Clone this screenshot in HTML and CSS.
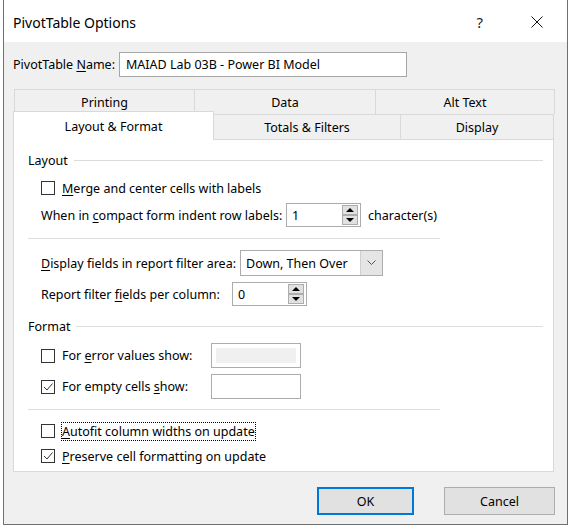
FILE: index.html
```html
<!DOCTYPE html>
<html>
<head>
<meta charset="utf-8">
<link rel="stylesheet" href="styles.css">
</head>
<body>
<div class="dialog">
  <div class="titlebar">
    <span class="title">PivotTable Options</span>
    <span class="help">?</span>
    <svg class="close" width="12" height="12" viewBox="0 0 12 12"><path d="M0.5 0.5 L11.5 11.5 M11.5 0.5 L0.5 11.5" stroke="#111" stroke-width="1"/></svg>
  </div>
  <div class="body">
    <div class="name-row">
      <span class="name-label">PivotTable <u>N</u>ame:</span>
      <div class="name-input">MAIAD Lab 03B - Power BI Model</div>
    </div>
    <div class="tabs">
      <div class="tab-row back">
        <div class="tab t-print">Printing</div>
        <div class="tab t-data">Data</div>
        <div class="tab t-alt">Alt Text</div>
      </div>
      <div class="tab-row front">
        <div class="tab t-layout active">Layout &amp; Format</div>
        <div class="tab t-totals">Totals &amp; Filters</div>
        <div class="tab t-display">Display</div>
      </div>
    </div>
    <div class="panel">
      <div class="legend legend-layout"><span>Layout</span><div class="legend-line"></div></div>
      <div class="row r-merge"><span class="cb"></span><span class="cb-label"><u>M</u>erge and center cells with labels</span></div>
      <div class="row r-compact">
        <span class="lbl lbl-compact">When in <u>c</u>ompact form indent row labels:</span>
        <div class="spin spin-compact"><span class="spin-val">1</span><div class="spin-btns"><div class="sb"><span class="tri up"></span></div><div class="sb"><span class="tri down"></span></div></div></div>
        <span class="after">character(s)</span>
      </div>
      <div class="sep sep1"></div>
      <div class="row r-display">
        <span class="lbl lbl-display"><u>D</u>isplay fields in report filter area:</span>
        <div class="combo"><span class="combo-val">Down, Then Over</span><div class="combo-btn"><svg width="9" height="6" viewBox="0 0 9 6"><path d="M0.5 0.5 L4.5 4.5 L8.5 0.5" fill="none" stroke="#555" stroke-width="1"/></svg></div></div>
      </div>
      <div class="row r-report">
        <span class="lbl lbl-report">Report filter <u>f</u>ields per column:</span>
        <div class="spin spin-report"><span class="spin-val">0</span><div class="spin-btns"><div class="sb"><span class="tri up"></span></div><div class="sb"><span class="tri down"></span></div></div></div>
      </div>
      <div class="legend legend-format"><span>Format</span><div class="legend-line"></div></div>
      <div class="row r-error">
        <span class="cb"></span><span class="cb-label fmt-label">For <u>e</u>rror values show:</span>
        <div class="tbox disabled"><div class="tbox-fill"></div></div>
      </div>
      <div class="row r-empty">
        <span class="cb checked"><svg width="12" height="12" viewBox="0 0 12 12"><path d="M2 6 L5 9 L10.5 2.5" fill="none" stroke="#333" stroke-width="1"/></svg></span><span class="cb-label fmt-label">For empty cells <u>s</u>how:</span>
        <div class="tbox"></div>
      </div>
      <div class="sep sep2"></div>
      <div class="row r-autofit"><span class="cb"></span><span class="cb-label focus"><u>A</u>utofit column widths on update</span></div>
      <div class="row r-preserve"><span class="cb checked"><svg width="12" height="12" viewBox="0 0 12 12"><path d="M2 6 L5 9 L10.5 2.5" fill="none" stroke="#333" stroke-width="1"/></svg></span><span class="cb-label"><u>P</u>reserve cell formatting on update</span></div>
    </div>
    <div class="buttons">
      <div class="btn ok">OK</div>
      <div class="btn cancel">Cancel</div>
    </div>
  </div>
</div>
</body>
</html>
```

FILE: styles.css
```css
html, body {
  margin: 0;
  padding: 0;
  background: #ffffff;
}
body {
  font-family: "Noto Sans", "Open Sans", sans-serif;
  font-size: 12.5px;
  color: #000;
}
u { text-decoration: underline; text-underline-offset: 2px; }
.dialog {
  margin-left: 3px;
  width: 563px;
  height: 524px;
  border: 1px solid #6f6f6f;
  border-top: none;
  display: flex;
  flex-direction: column;
  background: #f0f0f0;
}
.titlebar {
  height: 42px;
  background: #ffffff;
  display: flex;
  align-items: center;
  flex-shrink: 0;
}
.title {
  font-size: 14px;
  margin-left: 9px;
  margin-top: 3px;
  color: #000;
}
.help {
  font-size: 15px;
  margin-left: auto;
  margin-right: 48px;
  margin-top: 1px;
  color: #222;
}
.close {
  margin-right: 24px;
  margin-top: 2px;
}
.body {
  flex: 1;
  display: flex;
  flex-direction: column;
  padding: 10px 0 0 9px;
}
.name-row {
  display: flex;
  align-items: center;
  height: 25px;
}
.name-label {
  width: 106px;
  white-space: nowrap;
}
.name-input {
  width: 280px;
  height: 23px;
  border: 1px solid #a6a6a6;
  background: #fff;
  display: flex;
  align-items: center;
  padding-left: 6px;
}
.tabs {
  margin-top: 12px;
  width: 541px;
}
.tab-row {
  display: flex;
  height: 25px;
}
.tab {
  display: flex;
  align-items: center;
  justify-content: center;
  border: 1px solid #d9d9d9;
  border-bottom: none;
  background: #f0f0f0;
  box-sizing: border-box;
  height: 25px;
  margin-right: -1px;
}
.back { padding-left: 1px; }
.t-print { width: 181px; }
.t-data { width: 182px; }
.t-alt { width: 180px; }
.front { align-items: flex-end; }
.t-layout { width: 201px; }
.t-totals { width: 188px; }
.t-display { width: 154px; }
.tab.active {
  background: #fff;
  position: relative;
  z-index: 1;
  margin-bottom: -1px;
  height: 29px;
}
.panel {
  width: 541px;
  height: 333px;
  box-sizing: border-box;
  border: 1px solid #d9d9d9;
  background: #fff;
  padding-top: 10px;
}
.legend {
  display: flex;
  align-items: center;
  height: 20px;
  margin-left: 14px;
  margin-right: 10px;
}
.legend-line {
  flex: 1;
  height: 1px;
  background: #dcdcdc;
  margin-left: 6px;
  margin-top: 1px;
}
.row {
  display: flex;
  align-items: center;
  margin-left: 27px;
  white-space: nowrap;
}
.r-merge { height: 20px; margin-top: 8px; }
.r-compact { height: 24px; margin-top: 5px; }
.r-display { height: 26px; margin-top: 11px; }
.r-report { height: 24px; margin-top: 6px; }
.legend-format { margin-top: 10px; }
.r-error { height: 25px; margin-top: 7px; }
.r-empty { height: 25px; margin-top: 6px; }
.r-autofit { height: 20px; margin-top: 11px; }
.r-preserve { height: 20px; margin-top: 5px; }
.sep {
  height: 1px;
  background: #dcdcdc;
  margin-left: 14px;
  width: 412px;
}
.sep1 { margin-top: 11px; }
.sep2 { margin-top: 10px; }
.cb {
  width: 14px;
  height: 14px;
  box-sizing: border-box;
  border: 1px solid #333;
  background: #fff;
  display: inline-flex;
  align-items: center;
  justify-content: center;
  flex-shrink: 0;
}
.cb-label { margin-left: 7px; }
.focus { outline: 1px dotted #000; outline-offset: 0px; }
.lbl { margin-right: 5px; }
.lbl-compact { width: 240px; }
.lbl-display { width: 194px; }
.lbl-report { width: 186px; }
.fmt-label { width: 149px; }
.spin {
  height: 24px;
  box-sizing: border-box;
  border: 1px solid #acacac;
  background: #fff;
  display: flex;
  align-items: center;
  flex-shrink: 0;
}
.spin-compact { width: 75px; }
.spin-report { width: 75px; }
.spin-val { flex: 1; padding-left: 5px; }
.spin-btns {
  display: flex;
  flex-direction: column;
  margin-right: 2px;
}
.sb {
  width: 16px;
  height: 10px;
  box-sizing: border-box;
  border: 1px solid #adadad;
  background: #e1e1e1;
  display: flex;
  align-items: center;
  justify-content: center;
}
.tri {
  width: 0;
  height: 0;
  border-left: 4px solid transparent;
  border-right: 4px solid transparent;
}
.tri.up { border-bottom: 4px solid #000; }
.tri.down { border-top: 4px solid #000; }
.after { margin-left: 7px; }
.combo {
  width: 143px;
  height: 26px;
  box-sizing: border-box;
  border: 1px solid #acacac;
  background: #fff;
  display: flex;
  align-items: stretch;
  flex-shrink: 0;
}
.combo-val {
  flex: 1;
  display: flex;
  align-items: center;
  padding-left: 5px;
}
.combo-btn {
  width: 21px;
  background: #e5e5e5;
  border-left: 1px solid #cfcfcf;
  display: flex;
  align-items: center;
  justify-content: center;
}
.tbox {
  width: 90px;
  height: 25px;
  box-sizing: border-box;
  border: 1px solid #acacac;
  background: #fff;
  flex-shrink: 0;
}
.tbox.disabled { padding: 4px 4px; }
.tbox-fill {
  width: 100%;
  height: 100%;
  background: #f0f0f0;
}
.buttons {
  display: flex;
  margin-top: 15px;
  padding-left: 304px;
  gap: 30px;
}
.btn {
  height: 28px;
  box-sizing: border-box;
  border: 1px solid #adadad;
  background: #e1e1e1;
  display: flex;
  align-items: center;
  justify-content: center;
}
.ok {
  width: 97px;
  border: 2px solid #0078d7;
}
.cancel { width: 111px; }
```
